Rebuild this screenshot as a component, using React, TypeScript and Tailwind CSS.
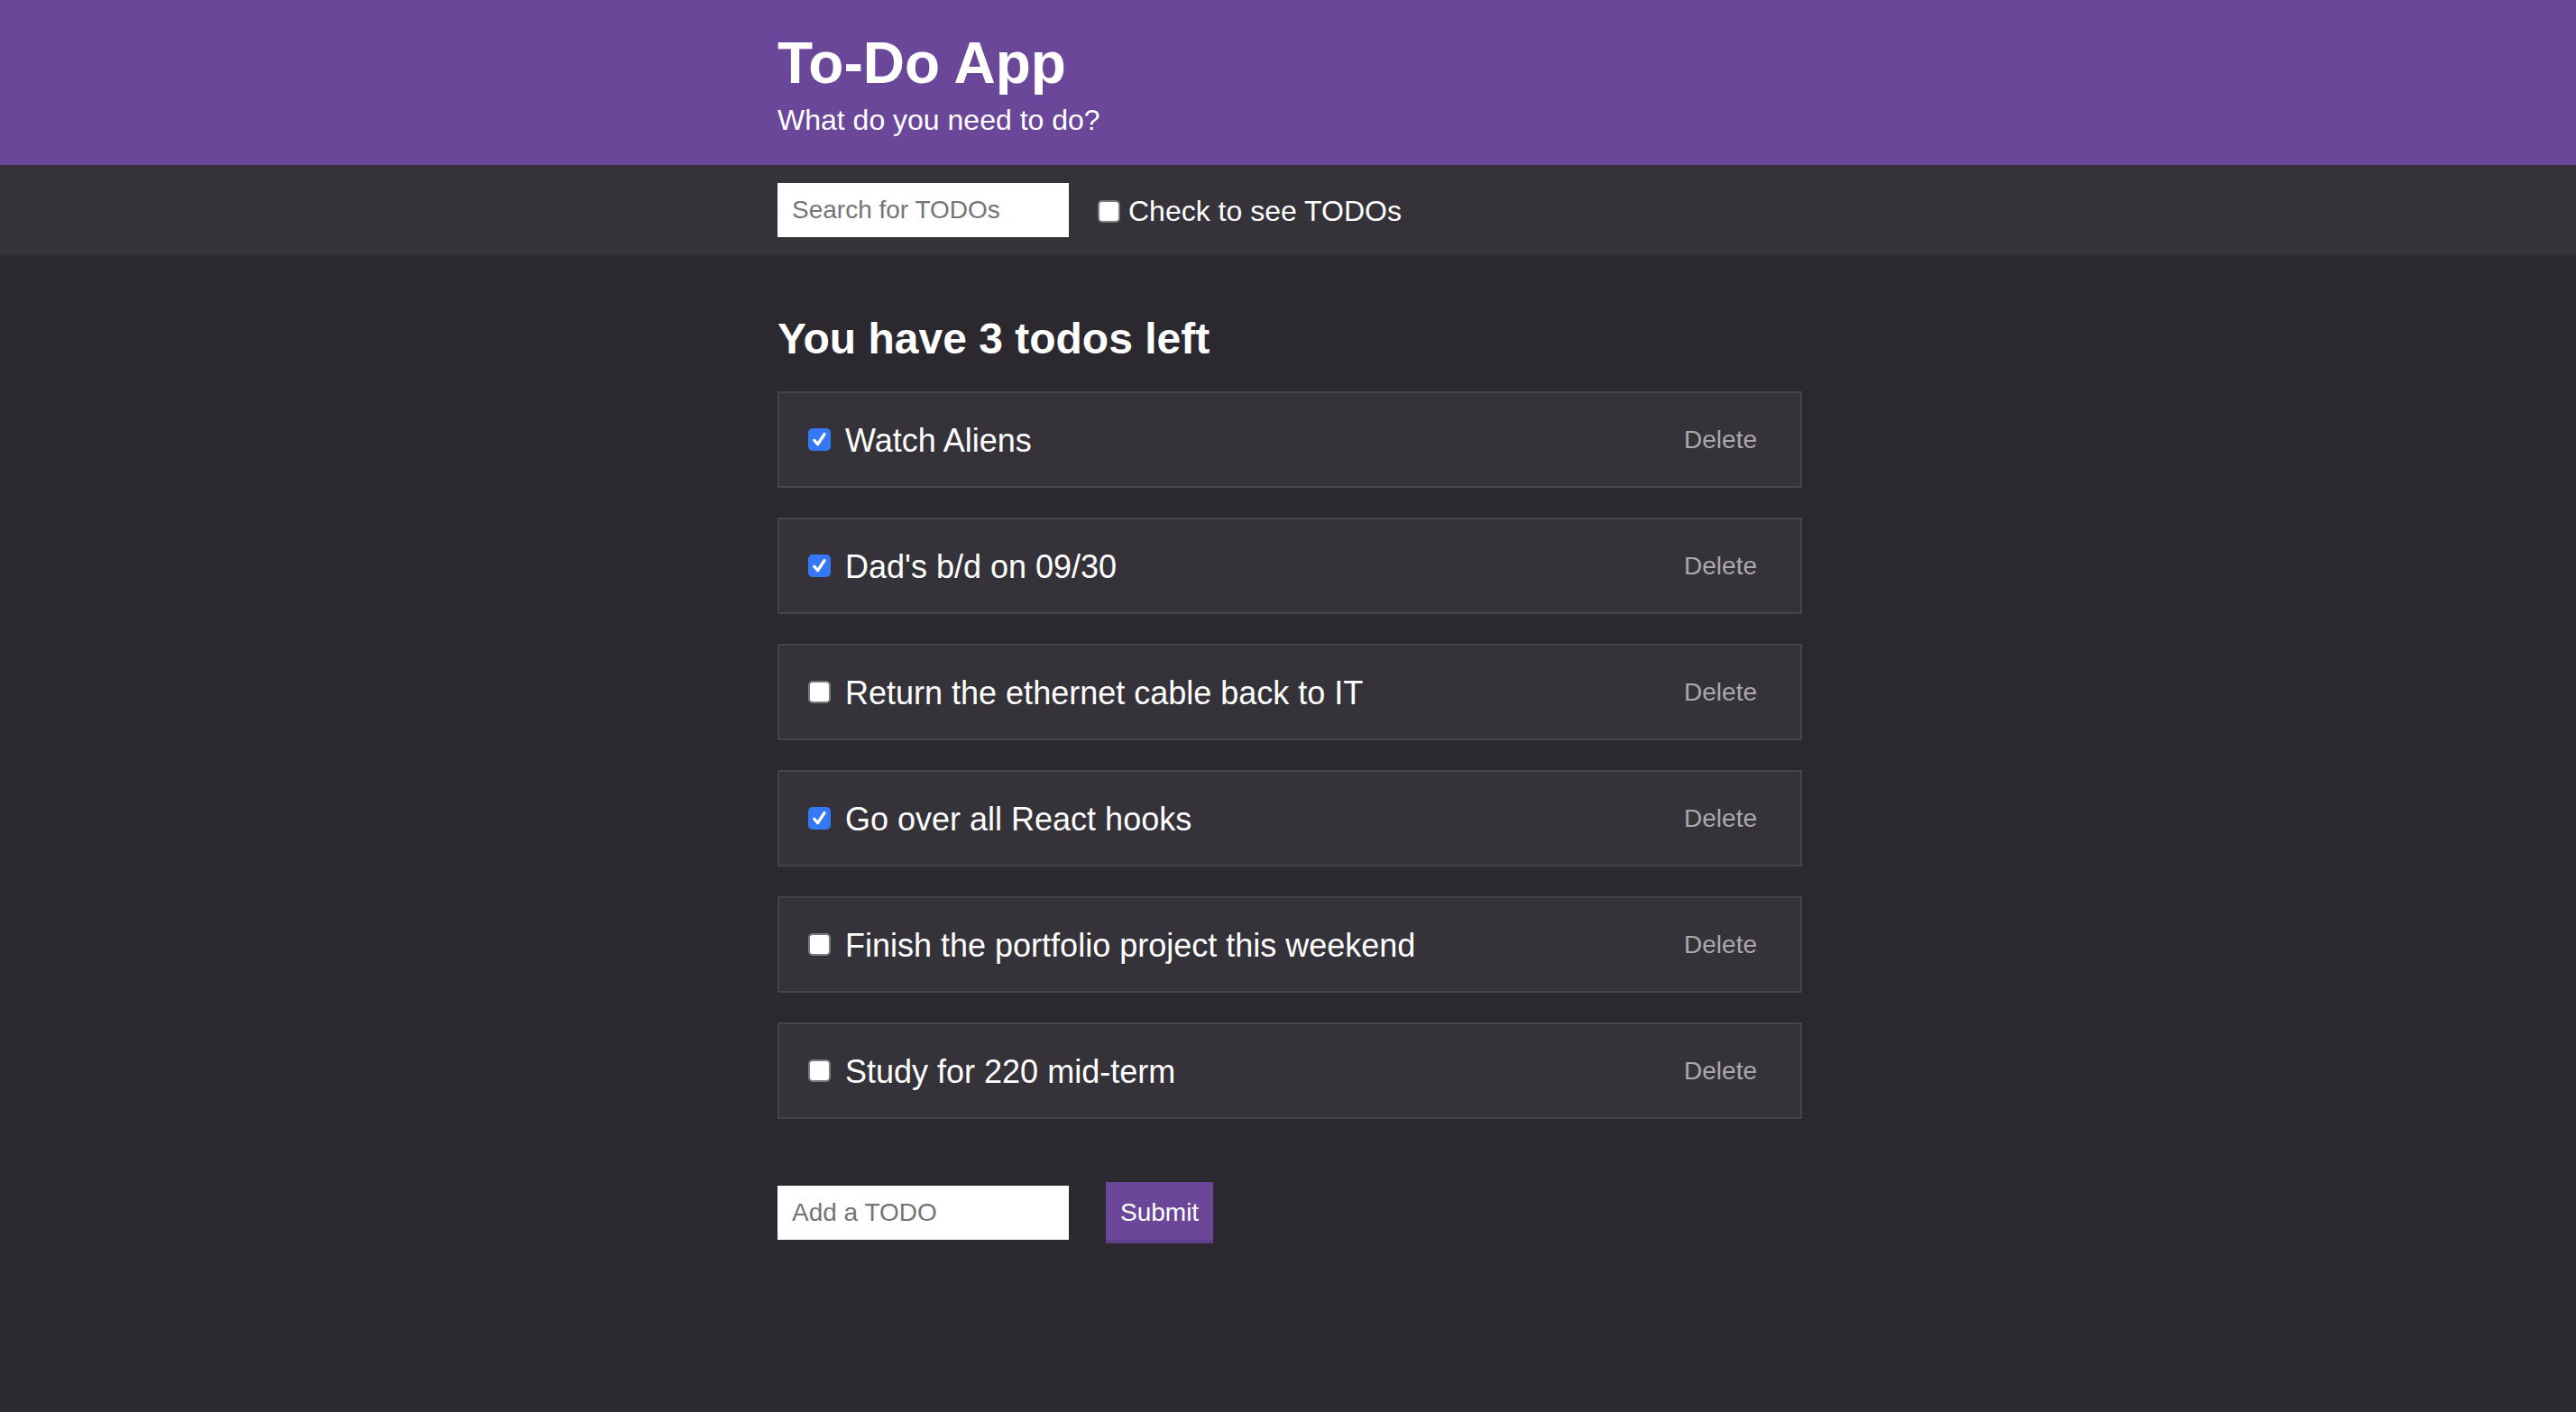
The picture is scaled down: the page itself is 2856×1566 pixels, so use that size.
import { useState } from "react";

type Todo = { id: number; text: string; done: boolean };

const initialTodos: Todo[] = [
  { id: 1, text: "Watch Aliens", done: true },
  { id: 2, text: "Dad's b/d on 09/30", done: true },
  { id: 3, text: "Return the ethernet cable back to IT", done: false },
  { id: 4, text: "Go over all React hooks", done: true },
  { id: 5, text: "Finish the portfolio project this weekend", done: false },
  { id: 6, text: "Study for 220 mid-term", done: false },
];

function Check({ checked, onClick }: { checked: boolean; onClick?: () => void }) {
  if (checked) {
    return (
      <span
        onClick={onClick}
        className="flex h-[25px] w-[25px] shrink-0 items-center justify-center rounded-[5px] bg-[#3478f6]"
      >
        <svg width="19" height="19" viewBox="0 0 16 16" fill="none">
          <path d="M3.2 8.6 L6.4 12.4 L12.6 3" stroke="white" strokeWidth="2.8" strokeLinecap="round" strokeLinejoin="round" />
        </svg>
      </span>
    );
  }
  return (
    <span
      onClick={onClick}
      className="block h-[25px] w-[25px] shrink-0 rounded-[5px] border-2 border-[#7b7b7e] bg-white"
    />
  );
}

export default function App() {
  const [todos, setTodos] = useState<Todo[]>(initialTodos);
  const [showTodos, setShowTodos] = useState(false);

  const toggle = (id: number) =>
    setTodos((t) => t.map((x) => (x.id === id ? { ...x, done: !x.done } : x)));
  const remove = (id: number) => setTodos((t) => t.filter((x) => x.id !== id));

  const left = todos.filter((t) => !t.done).length;

  return (
    <div className="min-h-screen bg-[#2b292f] font-['Liberation_Sans',Arial,sans-serif] text-white">
      {/* header */}
      <header className="h-[183px] bg-[#6a4799]">
        <div className="mx-auto w-[1140px] pl-[4px] pt-[38px]">
          <h1 className="text-[64px] font-bold leading-[64px]">To-Do App</h1>
          <p className="mt-[15px] text-[32px] leading-[32px]">What do you need to do?</p>
        </div>
      </header>

      {/* search bar */}
      <div className="h-[100px] bg-[#353339]">
        <div className="mx-auto flex w-[1140px] items-center gap-[32px] pl-[4px] pt-[20px]">
          <input
            className="h-[60px] w-[323px] bg-white px-[16px] text-[28px] text-black outline-none placeholder:text-[#757575]"
            placeholder="Search for TODOs"
          />
          <label className="flex items-center gap-[9px] pt-[2px] text-[32px] leading-[32px]">
            <Check checked={showTodos} onClick={() => setShowTodos(!showTodos)} />
            Check to see TODOs
          </label>
        </div>
      </div>

      {/* list */}
      <main className="mx-auto w-[1140px] pl-[4px] pt-[69px]">
        <h2 className="text-[48px] font-bold leading-[48px]">You have {left} todos left</h2>

        <ul className="mt-[34px] flex flex-col gap-[33px]">
          {todos.map((t) => (
            <li
              key={t.id}
              className="flex h-[107px] items-center justify-between border-2 border-[#46444b] bg-[#353339] pl-[32px] pr-[48px]"
            >
              <div className="flex items-center gap-[16px]">
                <Check checked={t.done} onClick={() => toggle(t.id)} />
                <span className="pt-[3px] text-[36px] leading-[36px] text-white">{t.text}</span>
              </div>
              <button onClick={() => remove(t.id)} className="text-[28px] text-[#a9a9ab]">
                Delete
              </button>
            </li>
          ))}
        </ul>

        <form className="mt-[70px] flex items-center gap-[41px]" onSubmit={(e) => e.preventDefault()}>
          <input
            className="h-[60px] w-[323px] bg-white px-[16px] text-[28px] text-black outline-none placeholder:text-[#757575]"
            placeholder="Add a TODO"
          />
          <button className="h-[68px] border-b-4 border-[#5d3e89] bg-[#6a4799] px-[16px] pt-[4px] text-[28px] text-white">
            Submit
          </button>
        </form>
      </main>
    </div>
  );
}
